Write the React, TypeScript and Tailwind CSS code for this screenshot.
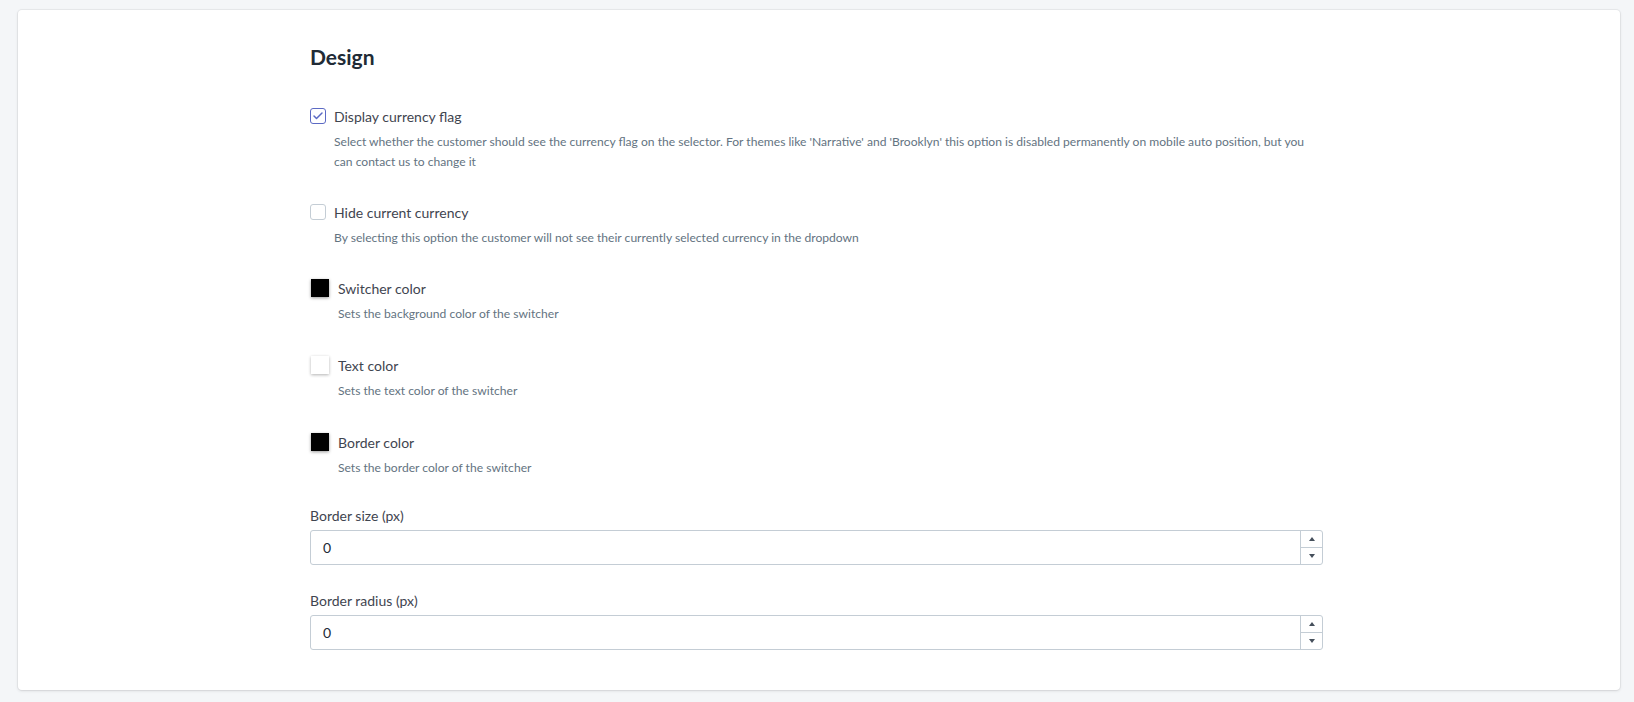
import { Check } from "lucide-react";

const font = { fontFamily: "Lato, 'Open Sans', sans-serif" };

function CheckRow({ checked, label, desc, className }: { checked: boolean; label: string; desc: React.ReactNode; className: string }) {
  return (
    <div className={className}>
      <div className="flex items-center h-5">
        <div
          className={
            checked
              ? "w-4 h-4 rounded-[3px] border border-[#5c6ac4] flex items-center justify-center bg-white"
              : "w-4 h-4 rounded-[3px] border border-[#c4cdd5] bg-white"
          }
        >
          {checked && <Check className="w-3 h-3 text-[#5c6ac4]" strokeWidth={3} />}
        </div>
        <span className="ml-2 text-[14px] text-[#3f4550]">{label}</span>
      </div>
      <p className="ml-6 mt-[6px] text-[12.1px] leading-5 text-[#637381]">{desc}</p>
    </div>
  );
}

function ColorRow({ color, label, desc, className }: { color: string; label: string; desc: string; className: string }) {
  return (
    <div className={className}>
      <div className="flex items-center h-5">
        <div
          className={
            color === "black"
              ? "ml-px w-[18px] h-[18px] bg-black shadow-[0_1px_3px_rgba(0,0,0,0.4)]"
              : "ml-px w-[18px] h-[18px] bg-white shadow-[0_1px_3px_rgba(0,0,0,0.3)]"
          }
        />
        <span className="ml-[9px] text-[14px] text-[#3f4550]">{label}</span>
      </div>
      <p className="ml-7 mt-[6px] text-[12.1px] leading-5 text-[#637381]">{desc}</p>
    </div>
  );
}

function NumberField({ label, className }: { label: string; className: string }) {
  return (
    <div className={className}>
      <div className="h-5 leading-5 text-[14px] text-[#3f4550]">{label}</div>
      <div className="mt-[4px] h-[35px] flex border border-[#c4cdd5] rounded-[3px] bg-white">
        <div className="flex-1 flex items-center pl-3 text-[14px] text-[#212b36]">0</div>
        <div className="w-[22px] flex flex-col border-l border-[#c4cdd5]">
          <div className="flex-1 flex items-center justify-center border-b border-[#c4cdd5]">
            <div className="w-0 h-0 border-l-[3px] border-r-[3px] border-b-[4px] border-l-transparent border-r-transparent border-b-[#454f5b]" />
          </div>
          <div className="flex-1 flex items-center justify-center">
            <div className="w-0 h-0 border-l-[3px] border-r-[3px] border-t-[4px] border-l-transparent border-r-transparent border-t-[#454f5b]" />
          </div>
        </div>
      </div>
    </div>
  );
}

export default function App() {
  return (
    <div className="min-h-[702px] bg-[#f4f6f8] pt-[10px] pb-3" style={font}>
      <div className="ml-[18px] mr-[14px] h-[680px] bg-white rounded-[4px] shadow-[0_0_0_1px_rgba(63,63,68,0.06),0_1px_3px_rgba(63,63,68,0.15)]">
        <div className="ml-[292px] w-[1013px] pt-[33px]">
          <h2 className="text-[21px] leading-7 font-bold text-[#212b36]">Design</h2>

          <CheckRow
            className="mt-[35px]"
            checked
            label="Display currency flag"
            desc={
              <>
                Select whether the customer should see the currency flag on the selector. For themes like 'Narrative' and 'Brooklyn' this option is disabled permanently on mobile auto position, but you
                <br />
                can contact us to change it
              </>
            }
          />
          <CheckRow
            className="mt-[30px]"
            checked={false}
            label="Hide current currency"
            desc="By selecting this option the customer will not see their currently selected currency in the dropdown"
          />

          <ColorRow className="mt-[30px]" color="black" label="Switcher color" desc="Sets the background color of the switcher" />
          <ColorRow className="mt-[31px]" color="white" label="Text color" desc="Sets the text color of the switcher" />
          <ColorRow className="mt-[31px]" color="black" label="Border color" desc="Sets the border color of the switcher" />

          <NumberField className="mt-[28px]" label="Border size (px)" />
          <NumberField className="mt-[26px]" label="Border radius (px)" />
        </div>
      </div>
    </div>
  );
}
